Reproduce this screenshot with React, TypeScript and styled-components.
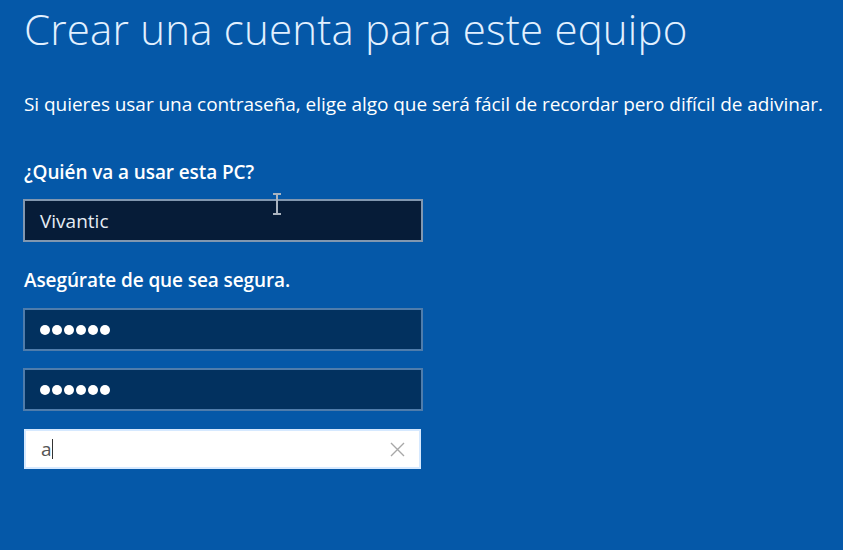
import React from "react";
import styled, { createGlobalStyle } from "styled-components";

const Global = createGlobalStyle`
  html, body { margin: 0; padding: 0; background: #0558a8; }
  body { width: 843px; height: 550px; overflow: hidden; }
`;

const Page = styled.div`
  width: 843px;
  height: 550px;
  background: #0558a8;
  box-sizing: border-box;
  padding: 0 0 0 23px;
  display: flex;
  flex-direction: column;
  align-items: flex-start;
  font-family: "Open Sans", "Noto Sans", sans-serif;
  color: #eaf4ff;
`;

const Title = styled.h1`
  margin: 0 0 0 1px;
  font-family: "Open Sans", sans-serif;
  font-weight: 300;
  font-size: 42px;
  line-height: 58px;
  letter-spacing: 0.2px;
  color: #e2f0ff;
  white-space: nowrap;
`;

const Intro = styled.p`
  margin: 34px 0 0 1px;
  font-size: 19px;
  line-height: 24px;
  letter-spacing: -0.05px;
  color: #ffffff;
  white-space: nowrap;
`;

const Label = styled.div<{ $top: number }>`
  margin: ${(p) => p.$top}px 0 0 1px;
  font-size: 19px;
  line-height: 24px;
  font-weight: 600;
  letter-spacing: -0.1px;
  color: #ffffff;
  white-space: nowrap;
`;

const Field = styled.div<{ $variant: "name" | "pass" | "active"; $top: number }>`
  position: relative;
  margin-top: ${(p) => p.$top}px;
  margin-left: ${(p) => (p.$variant === "active" ? "1px" : "0")};
  width: ${(p) => (p.$variant === "active" ? "397px" : "400px")};
  height: ${(p) => (p.$variant === "active" ? "40px" : "43px")};
  box-sizing: border-box;
  border: 2px solid
    ${(p) => (p.$variant === "active" ? "#d6e9ff" : p.$variant === "pass" ? "#4f7cab" : "#8197b0")};
  background: ${(p) =>
    p.$variant === "active" ? "#ffffff" : p.$variant === "pass" ? "#02315f" : "#061c38"};
  display: flex;
  align-items: center;
  padding: 0 14px 0 15px;
  font-size: 19px;
  color: ${(p) => (p.$variant === "active" ? "#555" : "#e4ebf3")};
`;

const Dots = styled.div`
  display: flex;
  gap: 2px;
`;

const Dot = styled.span`
  width: 10px;
  height: 10px;
  border-radius: 50%;
  background: #ffffff;
`;

const Caret = styled.span`
  display: inline-block;
  width: 1px;
  height: 20px;
  background: #333;
`;

const ClearButton = styled.span`
  margin-left: auto;
  display: flex;
  align-items: center;
`;

const IBeam = styled.svg`
  position: absolute;
  left: 247px;
  top: -8px;
`;

const PasswordDots = () => (
  <Dots>
    {Array.from({ length: 6 }).map((_, i) => (
      <Dot key={i} />
    ))}
  </Dots>
);

export default function App() {
  return (
    <>
      <Global />
      <Page>
        <Title>Crear una cuenta para este equipo</Title>
        <Intro>
          Si quieres usar una contraseña, elige algo que será fácil de recordar pero difícil de adivinar.
        </Intro>
        <Label $top={44}>¿Quién va a usar esta PC?</Label>
        <Field $variant="name" $top={15}>
          Vivantic
          <IBeam width="10" height="22" viewBox="0 0 10 22">
            <path d="M1 1h8M5 1v20M1 21h8" stroke="#aab4c0" strokeWidth="2" fill="none" />
          </IBeam>
        </Field>
        <Label $top={26}>Asegúrate de que sea segura.</Label>
        <Field $variant="pass" $top={16}>
          <PasswordDots />
        </Field>
        <Field $variant="pass" $top={17}>
          <PasswordDots />
        </Field>
        <Field $variant="active" $top={18}>
          a<Caret />
          <ClearButton>
            <svg width="15" height="15" viewBox="0 0 15 15">
              <path d="M1 1L14 14M14 1L1 14" stroke="#a8a8a8" strokeWidth="1.4" />
            </svg>
          </ClearButton>
        </Field>
      </Page>
    </>
  );
}
